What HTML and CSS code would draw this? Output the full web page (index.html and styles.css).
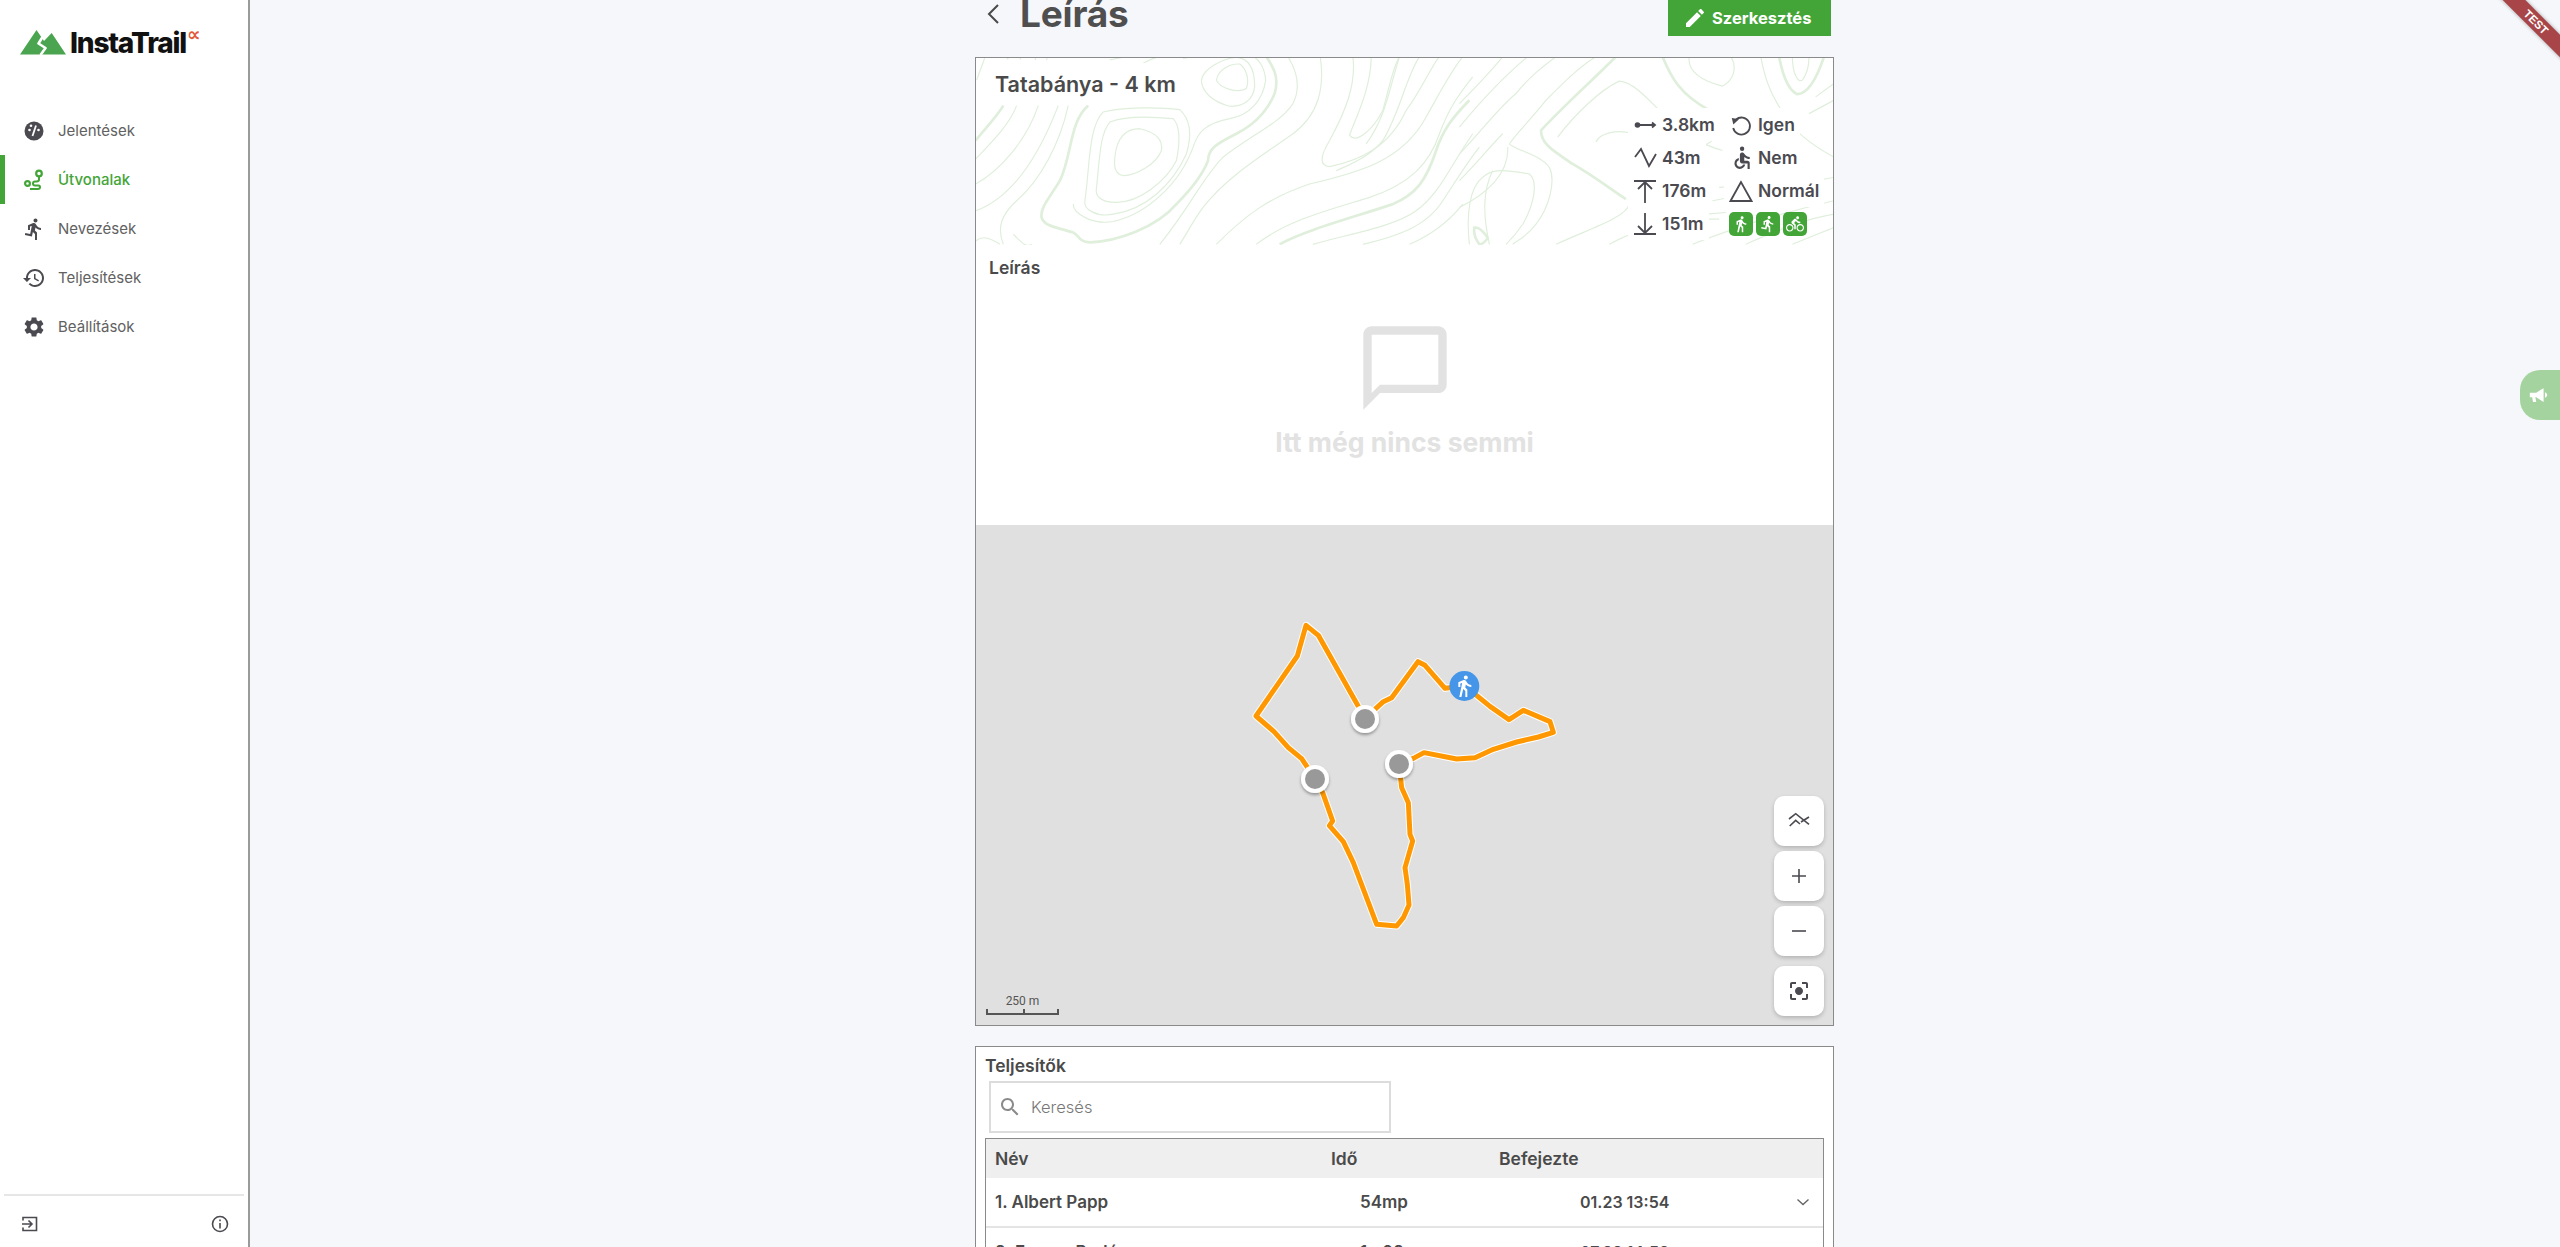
FILE: index.html
```html
<!DOCTYPE html>
<html lang="hu">
<head>
<meta charset="utf-8">
<title>InstaTrail</title>
<link rel="stylesheet" href="styles.css">
</head>
<body>
<aside class="sidebar">
  <div class="logo">
    <svg class="logo-mark" viewBox="20 30 46 25"><path class="logo-green" d="M20 54.5 36.500 30 44 41 51.700 33 66 54.500Z"/><path class="logo-trail" d="M42.500 37 38.500 43.500 45.500 48 40.500 55"/></svg>
    <span class="logo-text">InstaTrail</span><span class="logo-alpha">∝</span>
  </div>
  <nav class="nav">
    <a class="nav-item"><svg class="nav-icon" viewBox="0 0 24 24"><circle cx="12" cy="12" r="9.500"/><circle class="cut" cx="7.500" cy="11" r="1.300"/><circle class="cut" cx="9" cy="6.800" r="1.300"/><circle class="cut" cx="16.500" cy="11" r="1.300"/><path class="cut-line" d="M10.500 17 14 6.500"/></svg><span>Jelentések</span></a>
    <a class="nav-item active"><svg class="nav-icon" viewBox="0 0 24 24"><path class="route-line" d="M17 9v2.500c0 1.500-1 2-2.500 2H13c-1.500 0-2 1-2 2s.5 2 2 2h3.500c1 0 1.500.8 1.500 1.500S17.500 21 16 21H8"/><circle class="route-pin" cx="17" cy="5.500" r="2.800"/><circle class="route-pin" cx="5.500" cy="15.500" r="2.400"/></svg><span>Útvonalak</span></a>
    <a class="nav-item"><svg class="nav-icon" viewBox="0 0 24 24"><path d="M13.490 5.480c1.100 0 2-.9 2-2s-.9-2-2-2-2 .9-2 2 .9 2 2 2zm-3.600 13.900l1-4.400 2.100 2v6h2v-7.500l-2.100-2 .6-3c1.300 1.500 3.300 2.500 5.500 2.500v-2c-1.900 0-3.500-1-4.300-2.400l-1-1.600c-.4-.6-1-1-1.700-1-.3 0-.5.1-.8.1l-5.200 2.200v4.700h2v-3.400l1.800-.7-1.600 8.100-4.900-1-.4 2 7 1.400z"/></svg><span>Nevezések</span></a>
    <a class="nav-item"><svg class="nav-icon" viewBox="0 0 24 24"><path d="M13 3c-4.970 0-9 4.030-9 9H1l3.890 3.890.07.14L9 12H6c0-3.870 3.130-7 7-7s7 3.130 7 7-3.130 7-7 7c-1.930 0-3.680-.79-4.940-2.060l-1.420 1.420C8.270 19.990 10.510 21 13 21c4.970 0 9-4.030 9-9s-4.030-9-9-9zm-1 5v5l4.280 2.540.72-1.210-3.500-2.080V8H12z"/></svg><span>Teljesítések</span></a>
    <a class="nav-item"><svg class="nav-icon" viewBox="0 0 24 24"><path d="M19.140 12.940c.04-.3.06-.61.06-.94 0-.32-.02-.64-.07-.94l2.030-1.580c.18-.14.23-.41.12-.61l-1.920-3.320c-.12-.22-.37-.29-.59-.22l-2.390.96c-.5-.38-1.030-.7-1.620-.94L14.400 2.810c-.04-.24-.24-.41-.48-.41h-3.840c-.24 0-.43.17-.47.41L9.250 5.350c-.59.24-1.130.57-1.620.94L5.240 5.330c-.22-.08-.47 0-.59.22L2.740 8.870c-.12.21-.08.47.12.61l2.030 1.580c-.05.3-.09.63-.09.94s.02.64.07.94l-2.030 1.580c-.18.14-.23.41-.12.61l1.920 3.320c.12.22.37.29.59.22l2.390-.96c.5.38 1.030.7 1.620.94l.36 2.540c.05.24.24.41.48.41h3.840c.24 0 .44-.17.47-.41l.36-2.540c.59-.24 1.130-.56 1.620-.94l2.390.96c.22.08.47 0 .59-.22l1.920-3.320c.12-.22.07-.47-.12-.61l-2.010-1.580zM12 15.600c-1.980 0-3.600-1.620-3.600-3.600s1.620-3.600 3.600-3.600 3.600 1.620 3.600 3.600-1.620 3.600-3.600 3.600z"/></svg><span>Beállítások</span></a>
  </nav>
  <div class="side-foot">
    <svg class="foot-icon" viewBox="0 0 18 18"><path class="line" d="M2 5.500V2.500h13.500v13H2v-3M1 9h9.500M7.500 5.500 11 9l-3.500 3.500"/></svg>
    <svg class="foot-icon" viewBox="0 0 18 18"><circle class="line" cx="9" cy="9" r="7.500"/><path class="line" d="M9 8v5.500M9 4.500v1.800"/></svg>
  </div>
</aside>

<main class="main">
  <div class="column">
    <header class="page-head">
      <div class="page-title">
        <svg class="back" viewBox="0 0 14 22"><path d="M12 2 3 11l9 9"/></svg>
        <h1>Leírás</h1>
      </div>
      <button class="edit-btn"><svg viewBox="0 0 24 24"><path d="M3 17.250V21h3.750L17.810 9.940l-3.750-3.750L3 17.250zM20.710 7.040c.39-.39.39-1.020 0-1.410l-2.340-2.340c-.39-.39-1.020-.39-1.410 0l-1.830 1.830 3.750 3.750 1.830-1.830z"/></svg>Szerkesztés</button>
    </header>

    <section class="card">
      <div class="hero">
        <svg class="topo" viewBox="976 58 858 186" preserveAspectRatio="none">
          <g transform="translate(960 0) scale(.33333)">
            <path class="thick" d="M385 316C330 360 335 470 300 540 270 590 240 620 245 650 255 680 300 680 340 695 360 705 355 722 390 724 470 722 590 680 650 610 700 560 730 520 745 480 745 445 770 430 830 400 880 375 920 340 945 280 960 230 940 200 920 170"/>
            <path d="M465 470C470 420 490 385 540 385 590 395 610 420 605 450 590 490 530 525 490 525 465 520 462 500 465 470Z"/>
            <path d="M410 560C420 470 420 400 450 365 500 345 590 350 640 355 665 380 660 430 650 480 620 540 540 605 470 605 420 605 405 585 410 560Z"/>
            <path d="M375 600C390 500 385 380 430 335 490 320 600 320 660 328 695 360 695 410 680 460 640 550 560 625 460 640 410 650 370 625 375 600Z"/>
            <path d="M340 610C340 640 400 672 460 662 560 640 660 550 700 440 715 395 735 370 810 355 870 345 910 300 918 240 915 200 895 175 880 170"/>
            <path d="M770 240C775 210 810 190 840 192 860 205 870 240 860 265 835 280 780 265 770 240Z"/>
            <path d="M725 240C730 205 790 175 830 172 870 175 885 210 885 260 880 300 850 320 810 318 760 305 725 275 725 240Z"/>
            <path class="thick" d="M47 420C70 390 110 350 130 316"/>
            <path d="M47 475C100 420 150 370 170 316M47 550C120 510 200 420 235 316M47 630C130 600 220 510 295 316M130 730C110 680 125 640 170 600 240 540 300 430 325 316M160 700C190 730 200 740 215 730M47 720C70 700 95 715 120 730M50 240C60 210 70 190 75 170M450 180C470 175 490 172 500 170M550 190C570 178 590 172 600 170M670 175 700 170M140 178 150 170M180 178 185 170M225 180 230 170M260 180 262 170"/>
            <path d="M985 170C1010 210 1025 260 1000 310 960 370 880 400 790 470 730 530 690 620 600 730"/>
            <path d="M1082 170C1095 260 1080 340 1000 400 900 470 800 530 730 620 700 660 680 700 660 730"/>
            <path d="M1180 170C1190 250 1160 330 1110 420 1080 470 1080 495 1110 498 1200 480 1290 440 1340 330 1380 280 1420 190 1440 170"/>
            <path d="M1235 170C1235 270 1180 370 1170 405 1190 430 1240 390 1270 330 1290 260 1300 200 1320 170"/>
            <path d="M1320 170C1290 260 1280 350 1220 430M1380 170C1340 230 1320 340 1270 420 1240 460 1180 490 1130 510"/>
            <path d="M770 730C860 640 930 590 1050 550 1200 515 1330 480 1400 350 1440 280 1470 220 1510 170"/>
            <path d="M890 730C980 660 1100 630 1230 590 1350 550 1410 490 1440 400 1470 320 1500 280 1540 230"/>
            <path class="thick" d="M960 730C1030 690 1180 650 1300 610 1370 580 1400 540 1430 450 1450 390 1480 350 1530 300"/>
            <path d="M1060 730C1160 700 1300 680 1370 630 1440 580 1470 500 1540 400M1210 730C1300 710 1400 680 1450 600 1490 540 1520 490 1560 440M1350 730C1420 700 1470 660 1510 610"/>
          </g>
          <g transform="translate(1460 0) scale(.33333)">
            <path class="thick" d="M470 170C400 240 310 320 245 390 245 430 280 450 340 490 410 530 460 570 500 595"/>
            <path d="M295 410C340 350 420 270 480 243 520 245 560 290 620 350 670 400 720 430 790 450"/>
            <path d="M150 430C170 400 230 340 260 300 310 250 360 200 410 170M150 430C170 450 240 460 270 500 290 540 270 620 230 670 200 710 170 720 160 730"/>
            <path d="M30 730C20 640 30 560 70 530 100 500 150 510 210 520 240 545 220 620 190 670 170 700 150 720 140 730M90 730C70 640 70 570 100 510"/>
            <path d="M0 380C50 320 120 240 205 170M0 310C50 260 90 220 130 170M0 460C60 400 110 330 170 280 210 230 250 200 290 170M0 620C80 580 150 520 145 440M0 540C50 490 90 440 130 400"/>
            <path class="thick" d="M45 680C60 678 80 700 85 712 75 725 65 730 60 730 45 710 42 695 45 680Z"/>
            <path class="thick" d="M610 170C635 230 660 280 750 330"/>
            <path d="M690 170C685 210 720 240 790 258 825 240 835 200 815 170M410 425C420 400 470 385 520 400 580 420 620 420 700 440 760 440 780 400 780 380"/>
            <path d="M905 170C915 220 925 270 980 350 1010 400 1070 440 1125 470"/>
            <path class="thick" d="M960 170C970 220 985 270 1015 282 1050 280 1075 230 1095 170"/>
            <path d="M1000 170C1000 215 1015 250 1030 240 1045 220 1050 190 1050 170M1070 290 1125 250M1050 340 1125 300"/>
            <path d="M780 560 900 550M760 600 1125 530M740 640 800 635M290 730C400 680 500 650 510 610M450 730C520 690 640 650 780 655M700 730C800 690 950 640 1125 600M860 730C950 690 1050 650 1125 640M1000 730 1125 680"/>
          </g>
        </svg>
        <h2 class="hero-title">Tatabánya - 4 km</h2>
        <div class="stats">
          <div class="stat"><svg class="stat-icon" viewBox="0 0 24 24"><circle class="dot" cx="4.500" cy="12" r="2.800"/><path class="line" d="M4 12h18M19 9.500l3 2.500-3 2.500"/></svg>3.8km</div>
          <div class="stat"><svg class="stat-icon" viewBox="0 0 24 24"><path class="line" d="M7 6.500A8.500 8.500 0 1 1 4.200 15"/><path d="M2.800 5 10 6.200 4.300 11.500z"/></svg>Igen</div>
          <div class="stat"><svg class="stat-icon" viewBox="0 0 24 24"><path class="line" d="M2 11 8 3l8 17 7-12"/></svg>43m</div>
          <div class="stat"><svg class="stat-icon" viewBox="3 1 20 22"><circle class="dot" cx="14" cy="3.500" r="2"/><path d="M21 13v-2c-1.540.02-3.090-.75-4.070-1.830l-1.290-1.430c-.17-.19-.38-.34-.61-.45-.01 0-.01-.01-.02-.01H15c-.35-.2-.75-.3-1.190-.26C12.760 7.110 12 8.040 12 9.090V15c0 1.100.9 2 2 2h5v5h2v-5.500c0-1.100-.9-2-2-2h-3v-3.450c1.290 1.070 3.250 1.940 5 1.950zm-6.170 5c-.41 1.160-1.520 2-2.830 2-1.660 0-3-1.340-3-3 0-1.310.84-2.410 2-2.830V12.100c-2.280.46-4 2.480-4 4.900 0 2.760 2.240 5 5 5 2.420 0 4.440-1.720 4.900-4h-2.070z" /></svg>Nem</div>
          <div class="stat"><svg class="stat-icon" viewBox="0 0 24 24"><path class="line" d="M1 2h22M12 3v21M5 10l7-7 7 7"/></svg>176m</div>
          <div class="stat"><svg class="stat-icon" viewBox="0 0 24 24"><path class="line" d="M12 3 1.500 22h21Z"/></svg>Normál</div>
          <div class="stat"><svg class="stat-icon" viewBox="0 0 24 24"><path class="line" d="M1 22h22M12 1v20M5 14l7 7 7-7"/></svg>151m</div>
          <div class="stat badges">
            <span class="badge"><svg viewBox="0 0 24 24"><path d="M13.500 5.500c1.100 0 2-.9 2-2s-.9-2-2-2-2 .9-2 2 .9 2 2 2zM9.800 8.900 7 23h2.100l1.800-8 2.100 2v6h2v-7.500l-2.100-2 .6-3C14.800 12 16.800 13 19 13v-2c-1.900 0-3.500-1-4.300-2.400l-1-1.600c-.4-.6-1-1-1.700-1-.3 0-.5.1-.8.1L6 8.300V13h2V9.600l1.800-.7z"/></svg></span>
            <span class="badge"><svg viewBox="0 0 24 24"><path d="M13.490 5.480c1.100 0 2-.9 2-2s-.9-2-2-2-2 .9-2 2 .9 2 2 2zm-3.600 13.900 1-4.400 2.100 2v6h2v-7.500l-2.100-2 .6-3c1.300 1.500 3.300 2.500 5.500 2.500v-2c-1.900 0-3.500-1-4.300-2.400l-1-1.600c-.4-.6-1-1-1.700-1-.3 0-.5.1-.8.1l-5.200 2.200v4.700h2v-3.400l1.800-.7-1.600 8.100-4.900-1-.4 2 7 1.400z"/></svg></span>
            <span class="badge"><svg viewBox="0 0 24 24"><path d="M15.500 5.500c1.100 0 2-.9 2-2s-.9-2-2-2-2 .9-2 2 .9 2 2 2zM5 12c-2.800 0-5 2.200-5 5s2.200 5 5 5 5-2.200 5-5-2.200-5-5-5zm0 8.500c-1.900 0-3.500-1.600-3.500-3.500s1.600-3.500 3.500-3.500 3.500 1.600 3.500 3.500-1.600 3.500-3.500 3.500zm5.800-10 2.400-2.400.8.8c1.300 1.300 3 2.100 5.100 2.100V9c-1.500 0-2.700-.6-3.600-1.500l-1.900-1.900c-.5-.4-1-.6-1.600-.6s-1.100.2-1.400.6L7.800 8.400c-.4.4-.6.9-.6 1.400 0 .6.2 1.100.6 1.400L11 14v5h2v-6.200l-2.200-2.300zM19 12c-2.800 0-5 2.200-5 5s2.200 5 5 5 5-2.200 5-5-2.200-5-5-5zm0 8.500c-1.900 0-3.500-1.600-3.500-3.500s1.600-3.500 3.500-3.500 3.500 1.600 3.500 3.500-1.600 3.500-3.500 3.500z"/></svg></span>
          </div>
        </div>
      </div>

      <div class="desc">
        <h3 class="desc-title">Leírás</h3>
        <div class="empty">
          <svg viewBox="0 0 24 24"><path d="M20 2H4c-1.100 0-2 .9-2 2v18l4-4h14c1.100 0 2-.9 2-2V4c0-1.100-.9-2-2-2zm0 14H6l-2 2V4h16v12z"/></svg>
          <div class="empty-text">Itt még nincs semmi</div>
        </div>
      </div>

      <div class="map">
        <svg class="track" viewBox="0 0 1200 1020">
          <defs>
            <filter id="pin-shadow" x="-40%" y="-40%" width="180%" height="190%"><feDropShadow dx="0" dy="6" stdDeviation="5" flood-color="#000" flood-opacity=".35"/></filter>
          </defs>
          <path class="track-edge" d="M597 487 640 472 672 455 770 474 825 470 880 445 950 423 1015 408 1060 394 1050 362 970 328 927 356 870 316 795 255 735 262 675 193 654 182 575 290 550 302 495 352 355 103 318 73 292 165 168 345 222 392 265 440 305 473 345 533 368 575 398 660 388 674 430 722 460 785 530 970 590 975 610 950 627 912 622 850 615 800 638 720 630 700 625 605 605 560 597 487"/>
          <path class="track-core" d="M597 487 640 472 672 455 770 474 825 470 880 445 950 423 1015 408 1060 394 1050 362 970 328 927 356 870 316 795 255 735 262 675 193 654 182 575 290 550 302 495 352 355 103 318 73 292 165 168 345 222 392 265 440 305 473 345 533 368 575 398 660 388 674 430 722 460 785 530 970 590 975 610 950 627 912 622 850 615 800 638 720 630 700 625 605 605 560 597 487"/>
          <g class="pin"><circle class="pin-ring" cx="495" cy="354" r="42"/><circle class="pin-core" cx="495" cy="354" r="30"/></g>
          <g class="pin"><circle class="pin-ring" cx="597" cy="489" r="42"/><circle class="pin-core" cx="597" cy="489" r="30"/></g>
          <g class="pin"><circle class="pin-ring" cx="345" cy="534" r="42"/><circle class="pin-core" cx="345" cy="534" r="30"/></g>
          <circle class="hiker-bg" cx="793" cy="255" r="45"/>
          <path class="hiker" transform="translate(757 219) scale(3)" d="M13.500 5.500c1.100 0 2-.9 2-2s-.9-2-2-2-2 .9-2 2 .9 2 2 2zM9.800 8.900 7 23h2.100l1.800-8 2.100 2v6h2v-7.500l-2.100-2 .6-3C14.800 12 16.800 13 19 13v-2c-1.900 0-3.500-1-4.300-2.400l-1-1.600c-.4-.6-1-1-1.700-1-.3 0-.5.1-.8.1L6 8.300V13h2V9.600l1.800-.7z"/>
        </svg>
        <div class="scale"><span>250 m</span><div class="scale-bar"></div></div>
        <div class="map-tools">
          <button class="tool"><svg viewBox="0 0 24 24"><path class="line" d="M2 10 8.700 4.700 22 15.300M2.700 17l6-5.700 4.300 3.700M14 13l8-5"/></svg></button>
          <button class="tool"><svg viewBox="0 0 24 24"><path class="line" d="M12 5v14M5 12h14"/></svg></button>
          <button class="tool"><svg viewBox="0 0 24 24"><path class="line" d="M5 12h14"/></svg></button>
          <button class="tool tool-gap"><svg viewBox="0 0 24 24"><path d="M12 8c-2.210 0-4 1.790-4 4s1.790 4 4 4 4-1.790 4-4-1.790-4-4-4zm-7 7H3v4c0 1.100.9 2 2 2h4v-2H5v-4zM5 5h4V3H5c-1.100 0-2 .9-2 2v4h2V5zm14-2h-4v2h4v4h2V5c0-1.100-.9-2-2-2zm0 16h-4v2h4c1.100 0 2-.9 2-2v-4h-2v4z"/></svg></button>
        </div>
      </div>
    </section>

    <section class="card card-finishers">
      <h3 class="finishers-title">Teljesítők</h3>
      <div class="search">
        <svg viewBox="0 0 24 24"><path d="M15.500 14h-.79l-.28-.27C15.410 12.590 16 11.110 16 9.500 16 5.910 13.090 3 9.500 3S3 5.910 3 9.500 5.910 16 9.500 16c1.610 0 3.090-.59 4.230-1.570l.27.28v.79l5 4.990L20.490 19l-4.990-5zm-6 0C7.010 14 5 11.990 5 9.500S7.010 5 9.500 5 14 7.010 14 9.500 11.990 14 9.500 14z"/></svg>
        <span>Keresés</span>
      </div>
      <div class="table">
        <div class="t-head"><span>Név</span><span>Idő</span><span>Befejezte</span></div>
        <div class="t-row"><span>1. Albert Papp</span><span class="t-time">54mp</span><span class="t-date">01.23 13:54</span><svg class="t-chev" viewBox="0 0 14 8"><path d="M1.500 1.500 7 6.500l5.500-5"/></svg></div>
        <div class="t-row"><span>2. Ferenc Bodó</span><span class="t-time">1p 02</span><span class="t-date">07.22 14:58</span><svg class="t-chev" viewBox="0 0 14 8"><path d="M1.500 1.500 7 6.500l5.500-5"/></svg></div>
      </div>
    </section>
  </div>
</main>

<div class="feedback"><svg viewBox="0 0 24 24"><path d="M2 9.500h7l8-5v15l-8-5H8l1 5H5.500l-1-5H2zM18.500 9c1.500.6 2.500 1.700 2.500 3s-1 2.400-2.500 3z"/></svg></div>
<div class="ribbon">TEST</div>
</body>
</html>
```

FILE: styles.css
```css
* { box-sizing: border-box; }
html, body { margin: 0; height: 100%; }
body {
  display: flex;
  height: 1247px;
  overflow: hidden;
  background: #f6f7fa;
  color: #4a4a4a;
  font-family: Inter, "Liberation Sans", sans-serif;
  position: relative;
}
h1, h2, h3 { margin: 0; }
svg { display: block; }

.sidebar {
  width: 250px;
  flex: none;
  display: flex;
  flex-direction: column;
  background: #fff;
  border-right: 2px solid #9a9a9a;
}
.logo {
  display: flex;
  align-items: flex-start;
  height: 106px;
  padding: 30px 0 0 20px;
}
.logo-mark { width: 46px; height: 25px; flex: none; }
.logo-green { fill: #4ba44f; }
.logo-trail { fill: none; stroke: #fff; stroke-width: 2.600; stroke-linejoin: round; }
.logo-text {
  margin: -2px 0 0 4px;
  font-size: 28px;
  line-height: 30px;
  font-weight: 800;
  letter-spacing: -1.200px;
  color: #111;
}
.logo-alpha {
  margin: -6px 0 0 1px;
  font: italic 700 19px/20px "DejaVu Sans", sans-serif;
  color: #e2583a;
}
.nav { display: flex; flex-direction: column; }
.nav-item {
  height: 49px;
  display: flex;
  align-items: center;
  gap: 12px;
  padding-left: 22px;
  font-size: 15px;
  color: #616161;
  fill: #4a4a50;
}
.nav-item.active {
  color: #43a537;
  fill: #43a537;
  font-weight: 500;
  box-shadow: inset 5px 0 0 #43a537;
}
.nav-icon { width: 24px; height: 24px; flex: none; }
.cut { fill: #fff; }
.cut-line { stroke: #fff; stroke-width: 1.800; fill: none; }
.route-line { fill: none; stroke: #43a537; stroke-width: 2; }
.route-pin { fill: #fff; stroke: #43a537; stroke-width: 2.200; }
.side-foot {
  margin: auto 4px 0 4px;
  height: 53px;
  padding: 19px 15px 0 17px;
  border-top: 2px solid #e6e6e6;
  display: flex;
  justify-content: space-between;
}
.foot-icon { width: 18px; height: 18px; }
.line { fill: none; stroke: #4a4a50; stroke-width: 1.600; }

.main { flex: 1; min-width: 0; display: flex; justify-content: center; }
.column { width: 860px; flex: none; padding-right: 1px; }

.page-head {
  height: 36px;
  padding-right: 3px;
  display: flex;
  justify-content: space-between;
  align-items: flex-start;
}
.page-title { display: flex; align-items: center; height: 28px; }
.back { width: 14px; height: 22px; margin-left: 11px; fill: none; stroke: #4a4a4a; stroke-width: 2; }
.page-title h1 { margin-left: 20px; font-size: 37px; line-height: 28px; font-weight: 700; color: #4f4f4f; letter-spacing: -.2px; }
.edit-btn {
  width: 163px;
  height: 36px;
  border: 0;
  padding: 0 0 0 15px;
  display: flex;
  align-items: center;
  gap: 5px;
  background: #43a537;
  color: #fff;
  font: 700 16.500px/1 Inter, sans-serif;
}
.edit-btn svg { width: 24px; height: 24px; fill: #fff; }

.card {
  margin-top: 21px;
  border: 1px solid #8a8a8a;
  background: #fff;
}
.hero {
  position: relative;
  height: 187px;
  display: flex;
  justify-content: space-between;
  align-items: flex-start;
}
.topo {
  position: absolute;
  left: 0; top: 0;
  width: 100%; height: 100%;
  fill: none;
  stroke: #dfefdb;
  stroke-width: 3.500;
}
.topo .thick { stroke-width: 8; }
.hero-title {
  position: relative;
  margin: 5px 0 0 9px;
  padding: 9px 12px 9px 10px;
  background: #fff;
  font-size: 21.500px;
  line-height: 24px;
  font-weight: 600;
  color: #4a4a4a;
}
.stats {
  position: relative;
  align-self: flex-end;
  margin: 0 13px 5px 0;
  display: grid;
  grid-template-columns: 96px 96px;
  grid-auto-rows: 33px;
}
.stat {
  justify-self: start;
  display: flex;
  align-items: center;
  gap: 5px;
  padding: 0 5px;
  background: #fff;
  font-size: 17.500px;
  font-weight: 600;
  color: #4a4a50;
}
.stat-icon { width: 24px; height: 24px; flex: none; fill: #4a4a50; }
.stat-icon .line { stroke-width: 1.800; }
.dot { fill: #4a4a50; }
.badges { gap: 3px; padding: 0 5px; background: transparent; }
.badge {
  width: 24px;
  height: 24px;
  border-radius: 5px;
  background: #43a537;
  padding: 3px;
}
.badge svg { width: 18px; height: 18px; fill: #fff; }

.desc {
  height: 280px;
  padding: 13px 0 0 13px;
  display: flex;
  flex-direction: column;
}
.desc-title { font-size: 17.500px; line-height: 20px; font-weight: 600; color: #4a4a4a; }
.empty {
  margin: 40px 0 0 -13px;
  display: flex;
  flex-direction: column;
  align-items: center;
  color: #e2e2e2;
}
.empty svg { width: 100px; height: 100px; fill: #e2e2e2; }
.empty-text { margin-top: 9px; font-size: 26.500px; line-height: 30px; font-weight: 700; }

.map {
  position: relative;
  height: 500px;
  background: #e0e0e0;
}
.track {
  position: absolute;
  left: 224px;
  top: 76px;
  width: 400px;
  height: 340px;
}
.track-edge, .track-core { fill: none; stroke-linejoin: round; }
.track-edge { stroke: #fff; stroke-width: 21; }
.track-core { stroke: #ff9800; stroke-width: 15; }
.pin { filter: url(#pin-shadow); }
.pin-ring { fill: #fff; }
.pin-core { fill: #999; }
.hiker-bg { fill: #4596e8; }
.hiker { fill: #fff; }
.scale {
  position: absolute;
  left: 10px;
  bottom: 10px;
  width: 73px;
  text-align: center;
  font: 12px/14px Roboto, sans-serif;
  color: #555;
}
.scale-bar {
  position: relative;
  height: 6px;
  margin-top: 1px;
  border: 2px solid #555;
  border-top: 0;
}
.scale-bar::after {
  content: "";
  position: absolute;
  left: 50%;
  bottom: 0;
  width: 2px;
  height: 4px;
  background: #555;
}
.map-tools {
  position: absolute;
  right: 9px;
  bottom: 9px;
  display: flex;
  flex-direction: column;
  gap: 5px;
}
.tool {
  width: 50px;
  height: 50px;
  padding: 13px;
  border: 0;
  border-radius: 10px;
  background: #fff;
  box-shadow: 0 2px 4px rgba(0,0,0,.2);
}
.tool-gap { margin-top: 5px; }
.tool svg { width: 24px; height: 24px; fill: #4a4a50; }

.card-finishers {
  margin-top: 20px;
  height: 260px;
  padding: 9px 9px 0 9px;
}
.finishers-title { font-size: 17.500px; line-height: 20px; font-weight: 600; color: #4a4a4a; }
.search {
  width: 402px;
  height: 52px;
  margin: 5px 0 0 4px;
  padding-left: 7px;
  display: flex;
  align-items: center;
  gap: 9px;
  border: 2px solid #dcdcdc;
  color: #777;
  font-size: 16.500px;
  font-weight: 300;
}
.search svg { width: 24px; height: 24px; fill: #8a8a8a; }
.table {
  margin-top: 5px;
  border: 1px solid #8a8a8a;
  border-bottom: 0;
}
.t-head {
  height: 39px;
  padding-left: 9px;
  display: flex;
  align-items: center;
  background: #efefef;
  font-size: 17.500px;
  font-weight: 600;
}
.t-head span:nth-child(1) { width: 336px; }
.t-head span:nth-child(2) { width: 168px; }
.t-row {
  height: 50px;
  padding-left: 9px;
  display: flex;
  align-items: center;
  border-bottom: 2px solid #e4e4e4;
  font-size: 17px;
  font-weight: 600;
}
.t-row span:nth-child(1) { width: 365px; }
.t-time { width: 220px; }
.t-date { width: 216px; font-size: 16px; }
.t-chev { width: 14px; height: 8px; fill: none; stroke: #666; stroke-width: 1.400; }

.feedback {
  position: absolute;
  right: 0;
  top: 370px;
  width: 40px;
  height: 50px;
  padding: 14px 0 0 8px;
  border-radius: 20px 0 0 20px;
  background: #a5d3a0;
}
.feedback svg { width: 22px; height: 22px; fill: #fff; }

.ribbon {
  position: absolute;
  right: -41px;
  top: 14px;
  width: 130px;
  height: 16px;
  transform: rotate(45deg);
  background: #a84548;
  box-shadow: 0 0 4px rgba(0,0,0,.35);
  color: #fff;
  text-align: center;
  font: 700 11.500px/16px "Liberation Sans", sans-serif;
}
```
